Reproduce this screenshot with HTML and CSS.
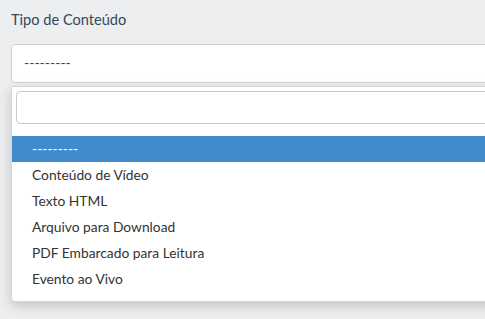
FILE: index.html
```html
<html>
<head>
    <meta charset="utf-8">
    <title>Tipo de Conteúdo</title>
    <link rel="stylesheet" href="styles.css">
</head>
<body>
    <div class="field">
        <label class="field-label">Tipo de Conteúdo</label>
        <div class="select-wrap">
            <div class="select-box">---------</div>

            <div class="dropdown">
                <div class="search-wrap">
                    <input type="text" class="search-input">
                </div>
                <ul class="options">
                    <li class="option selected">---------</li>
                    <li class="option">Conteúdo de Vídeo</li>
                    <li class="option">Texto HTML</li>
                    <li class="option">Arquivo para Download</li>
                    <li class="option">PDF Embarcado para Leitura</li>
                    <li class="option">Evento ao Vivo</li>
                </ul>
            </div>
        </div>
    </div>
</body>
</html>
```

FILE: styles.css
```css
body {
    margin: 0;
    background-color: #eceef0;
    font-family: Lato, "Noto Sans", sans-serif;
    overflow: hidden;
}

.field {
    padding: 10px 0 0 11px;
    width: 500px;
}

.field-label {
    display: block;
    color: #34475c;
    font-size: 14.6px;
    line-height: 20px;
    margin-bottom: 14px;
}

.select-wrap {
    position: relative;
}

.select-box {
    height: 37px;
    line-height: 35px;
    border: 1px solid #cfcfcf;
    border-radius: 4px;
    background: #fff;
    padding-left: 12px;
    color: #444;
    font-size: 14px;
}

.dropdown {
    position: absolute;
    left: 0;
    right: 0;
    top: 42px;
    background: #fff;
    border: 1px solid #d6d6d6;
    border-radius: 0 0 4px 4px;
    box-shadow: 0 4px 12px rgba(0, 0, 0, 0.18);
    padding-bottom: 9px;
}

.search-wrap {
    padding: 4px;
}

.search-input {
    display: block;
    width: 100%;
    height: 33px;
    border: 1px solid #cccccc;
    border-radius: 4px;
    box-sizing: border-box;
    outline: none;
}

.options {
    list-style: none;
    margin: 8px 0 0 0;
    padding: 0;
}

.option {
    height: 26px;
    line-height: 26px;
    padding-left: 20px;
    color: #333;
    font-size: 13.8px;
}

.option.selected {
    background-color: #3f8bcb;
    color: #fff;
}
```
